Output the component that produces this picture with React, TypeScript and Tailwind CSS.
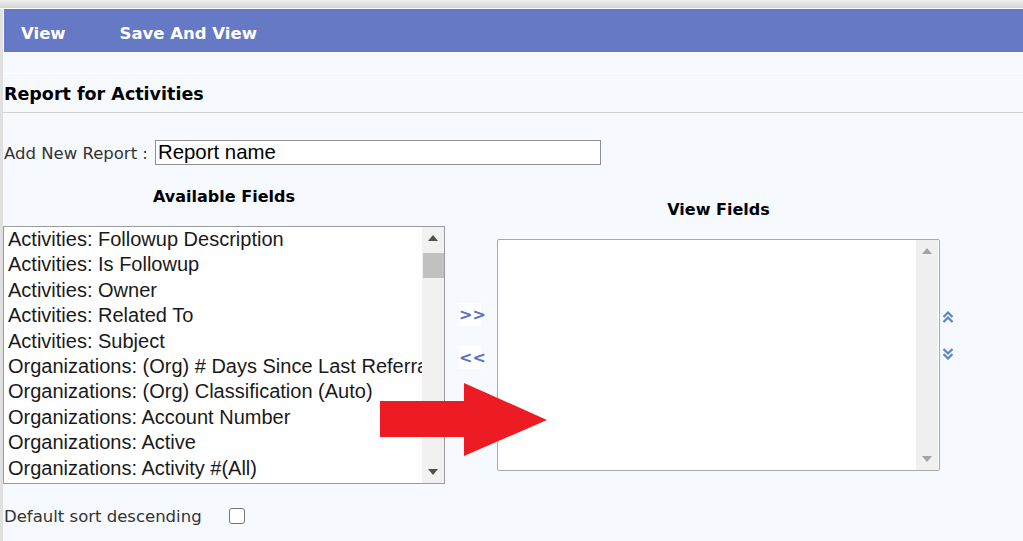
import React from "react";

const availableFields = [
  "Activities: Followup Description",
  "Activities: Is Followup",
  "Activities: Owner",
  "Activities: Related To",
  "Activities: Subject",
  "Organizations: (Org) # Days Since Last Referral",
  "Organizations: (Org) Classification (Auto)",
  "Organizations: Account Number",
  "Organizations: Active",
  "Organizations: Activity #(All)",
];

function ScrollArrow({ dir, color }: { dir: "up" | "down"; color: string }) {
  return (
    <svg width="10" height="6" viewBox="0 0 10 6">
      {dir === "up" ? (
        <polygon points="0,6 5,0 10,6" fill={color} />
      ) : (
        <polygon points="0,0 10,0 5,6" fill={color} />
      )}
    </svg>
  );
}

function DoubleChevron({ dir }: { dir: "up" | "down" }) {
  const d =
    dir === "up"
      ? "M1.5 6 L6 1.5 L10.5 6 M1.5 11 L6 6.5 L10.5 11"
      : "M1.5 1 L6 5.5 L10.5 1 M1.5 6 L6 10.5 L10.5 6";
  return (
    <svg width="12" height="12" viewBox="0 0 12 12">
      <path d={d} fill="none" stroke="#5a86c5" strokeWidth="2.2" />
    </svg>
  );
}

export default function App() {
  return (
    <div className="relative w-[1023px] h-[541px] overflow-hidden bg-[#f6f9fe] font-['DejaVu_Sans',sans-serif]">
      <div className="h-[8px] bg-gradient-to-b from-[#efefef] to-[#d5d5d5]" />
      <div className="h-px bg-white" />
      <div className="flex h-[532px]">
        <div className="w-[3px] bg-[#e0e0e0]" />
        <div className="flex-1 flex flex-col">
          {/* nav bar */}
          <div className="ml-px h-[43px] pt-[7px] bg-[#6679c5] flex items-center text-white font-bold text-[16.5px]">
            <span className="ml-[17px]">View</span>
            <span className="ml-[54px]">Save And View</span>
          </div>
          <div className="h-[21px]" />
          <div className="h-px bg-white" />
          <div className="h-[39px] pt-[2px] flex items-center border-b border-[#d2d2d2] pl-px">
            <span className="font-bold text-[17.5px] text-black">Report for Activities</span>
          </div>

          {/* report name */}
          <div className="mt-[27px] h-[25px] flex items-center pl-px">
            <span className="text-[16.5px] text-[#333] pt-[3px]">Add New Report :</span>
            <input
              defaultValue="Report name"
              className="ml-[7px] w-[446px] h-[25px] border border-[#8f8f8f] bg-white px-[2px] font-['Liberation_Sans',Arial,sans-serif] text-[20.4px] text-black outline-none"
            />
          </div>

          {/* field pickers */}
          <div className="mt-[22px] flex items-center">
            <div className="w-[442px] flex flex-col">
              <div className="text-center font-bold text-[16px] leading-[19px] text-black">
                Available Fields
              </div>
              <div className="mt-[20px] h-[258px] border border-[#9a9a9a] bg-white flex">
                <div className="flex-1 overflow-hidden pl-[4px] font-['Liberation_Sans',Arial,sans-serif] text-[20px] leading-[25.4px] text-[#1a1a1a] whitespace-nowrap">
                  {availableFields.map((f) => (
                    <div key={f}>{f}</div>
                  ))}
                </div>
                <div className="w-[22px] bg-[#f1f1f1] flex flex-col items-center">
                  <div className="h-[22px] flex items-center justify-center">
                    <ScrollArrow dir="up" color="#505050" />
                  </div>
                  <div className="w-[21px] h-[25px] bg-[#c1c1c1] mt-[4px]" />
                  <div className="flex-1" />
                  <div className="h-[22px] flex items-center justify-center">
                    <ScrollArrow dir="down" color="#505050" />
                  </div>
                </div>
              </div>
            </div>

            <div className="w-[52px] flex flex-col gap-[20px] pl-[14px]">
              <button className="w-[22px] h-[23px] bg-white text-[#5b6fc7] font-bold text-[16px] leading-[23px] text-center">
                &gt;&gt;
              </button>
              <button className="w-[22px] h-[23px] bg-white text-[#5b6fc7] font-bold text-[16px] leading-[23px] text-center">
                &lt;&lt;
              </button>
            </div>

            <div className="w-[443px] flex flex-col">
              <div className="text-center font-bold text-[16px] leading-[19px] text-black">
                View Fields
              </div>
              <div className="mt-[20px] h-[232px] border border-[#a9a9a9] rounded-[2px] bg-white flex">
                <div className="flex-1" />
                <div className="w-[22px] bg-[#f0f0f0] flex flex-col items-center mr-px">
                  <div className="h-[22px] flex items-center justify-center">
                    <ScrollArrow dir="up" color="#a3a3a3" />
                  </div>
                  <div className="flex-1" />
                  <div className="h-[22px] flex items-center justify-center">
                    <ScrollArrow dir="down" color="#a3a3a3" />
                  </div>
                </div>
              </div>
            </div>

            <div className="ml-[2px] flex flex-col gap-[25px]">
              <DoubleChevron dir="up" />
              <DoubleChevron dir="down" />
            </div>
          </div>

          {/* sort option */}
          <div className="mt-[23px] flex items-center pl-px h-[20px]">
            <span className="text-[16.5px] text-[#333]">Default sort descending</span>
            <span className="ml-[27px] -mt-[2px] w-[16px] h-[16px] border border-[#767676] rounded-[3px] bg-white" />
          </div>
        </div>
      </div>

      {/* red annotation arrow */}
      <svg
        className="absolute left-[380px] top-[383px]"
        width="167"
        height="73"
        viewBox="0 0 167 73"
      >
        <polygon points="0,18 84,18 84,0 167,37 84,73 84,54 0,54" fill="#ed1c24" />
      </svg>
    </div>
  );
}
